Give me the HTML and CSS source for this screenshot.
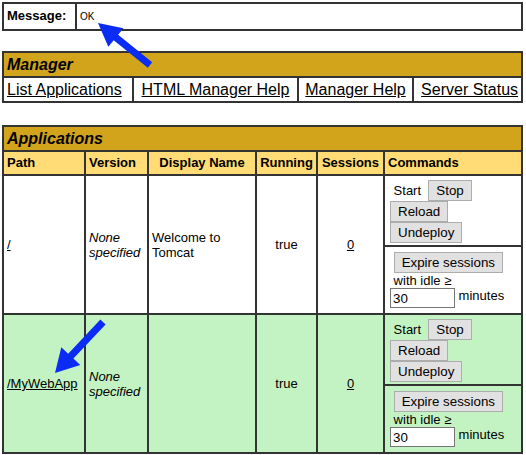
FILE: index.html
```html
<!DOCTYPE html>
<html>
<head>
<meta charset="utf-8">
<title>Tomcat Web Application Manager</title>
<link rel="stylesheet" href="styles.css">
</head>
<body>
<table class="msg">
 <colgroup><col class="w73"><col></colgroup>
 <tr>
  <td class="label">Message:</td>
  <td class="ok">OK</td>
 </tr>
</table>

<table class="mgr">
 <colgroup><col class="w130"><col class="w165"><col class="w115"><col class="w109"></colgroup>
 <tr><td colspan="4" class="title">Manager</td></tr>
 <tr class="links">
  <td><a href="#">List Applications</a></td>
  <td class="center"><a href="#">HTML Manager Help</a></td>
  <td class="center"><a href="#">Manager Help</a></td>
  <td class="right"><a href="#">Server Status</a></td>
 </tr>
</table>

<table class="apps">
 <colgroup>
  <col class="w82"><col class="w63"><col class="w108"><col class="w61"><col class="w67"><col class="w138">
 </colgroup>
 <tr><td colspan="6" class="title">Applications</td></tr>
 <tr class="head">
  <td>Path</td>
  <td>Version</td>
  <td class="center">Display Name</td>
  <td class="center">Running</td>
  <td class="center">Sessions</td>
  <td>Commands</td>
 </tr>

 <tr>
  <td rowspan="2"><a href="#">/</a></td>
  <td rowspan="2"><i>None specified</i></td>
  <td rowspan="2">Welcome to Tomcat</td>
  <td rowspan="2" class="center">true</td>
  <td rowspan="2" class="center"><a href="#">0</a></td>
  <td class="cmd">&nbsp;Start&nbsp; <button>Stop</button> <button>Reload</button> <button>Undeploy</button></td>
 </tr>
 <tr>
  <td class="expire">&nbsp;<button>Expire sessions</button><br>&nbsp;with idle &ge;<br><input type="text" value="30">&nbsp;minutes</td>
 </tr>

 <tr class="alt">
  <td rowspan="2"><a href="#">/MyWebApp</a></td>
  <td rowspan="2"><i>None specified</i></td>
  <td rowspan="2"></td>
  <td rowspan="2" class="center">true</td>
  <td rowspan="2" class="center"><a href="#">0</a></td>
  <td class="cmd">&nbsp;Start&nbsp; <button>Stop</button> <button>Reload</button> <button>Undeploy</button></td>
 </tr>
 <tr class="alt">
  <td class="expire">&nbsp;<button>Expire sessions</button><br>&nbsp;with idle &ge;<br><input type="text" value="30">&nbsp;minutes</td>
 </tr>
</table>

<svg class="arrows" width="526" height="455" viewBox="0 0 526 455">
 <polygon points="98,23 123.4,28.2 118.1,34.8 152.2,62.3 147.8,67.7 113.7,40.2 108.3,46.8"/>
 <polygon points="55,373 80.3,365.1 73.4,358.6 105.6,324.4 100.4,319.6 68.2,353.8 61.3,347.3"/>
</svg>
</body>
</html>
```

FILE: styles.css
```css
body {
	margin: 0;
	padding: 2px 0 0 2px;
	font-family: "Liberation Sans", Arial, sans-serif;
	color: #000;
}
a {
	color: #000;
}
table {
	width: 521px;
	table-layout: fixed;
	border: 1px solid #333;
	border-spacing: 0;
	font-size: 13px;
}
td {
	border: 1px solid #333;
	padding: 3px;
	line-height: 15px;
	text-align: left;
	vertical-align: middle;
}
td.center { text-align: center; }
td.right { text-align: right; }

.w73 { width: 73px; }
.w130 { width: 130px; }
.w165 { width: 165px; }
.w115 { width: 115px; }
.w109 { width: 109px; }
.w82 { width: 82px; }
.w63 { width: 63px; }
.w108 { width: 108px; }
.w61 { width: 61px; }
.w67 { width: 67px; }
.w138 { width: 138px; }

/* message box */
.msg td {
	line-height: 18px;
	vertical-align: baseline;
}
.msg .label { font-weight: bold; }
.msg .ok { font-size: 10px; }

.mgr { margin-top: 20px; }
.apps { margin-top: 22px; }

.title {
	background: #d2a41c;
	font-size: 16px;
	font-weight: bold;
	font-style: italic;
	line-height: 17px;
}
.links td {
	font-size: 16px;
	line-height: 17px;
}
.head td {
	background: #ffdc75;
	font-weight: bold;
	line-height: 16px;
	vertical-align: top;
}
.alt td { background: #c3f3c3; }

/* commands column */
.cmd {
	padding: 4px 4px 2px 5px;
	line-height: 21px;
}
.expire {
	padding: 5px 4px 5px 5px;
}
.cmd button, .expire button {
	height: 21px;
	margin: 0;
	padding: 0 7px;
	border: 1px solid #adadad;
	background: #e1e1e1;
	color: #000;
	font: 13.33px "Liberation Sans", Arial, sans-serif;
	line-height: 19px;
	vertical-align: top;
}
.expire input {
	box-sizing: border-box;
	width: 65px;
	height: 20px;
	margin: 0;
	padding: 0 2px;
	border: 1px solid #767676;
	background: #fff;
	font: 13.33px "Liberation Sans", Arial, sans-serif;
	vertical-align: top;
}

.arrows {
	position: absolute;
	left: 0;
	top: 0;
	pointer-events: none;
}
.arrows polygon { fill: #0a2cf5; }
```
